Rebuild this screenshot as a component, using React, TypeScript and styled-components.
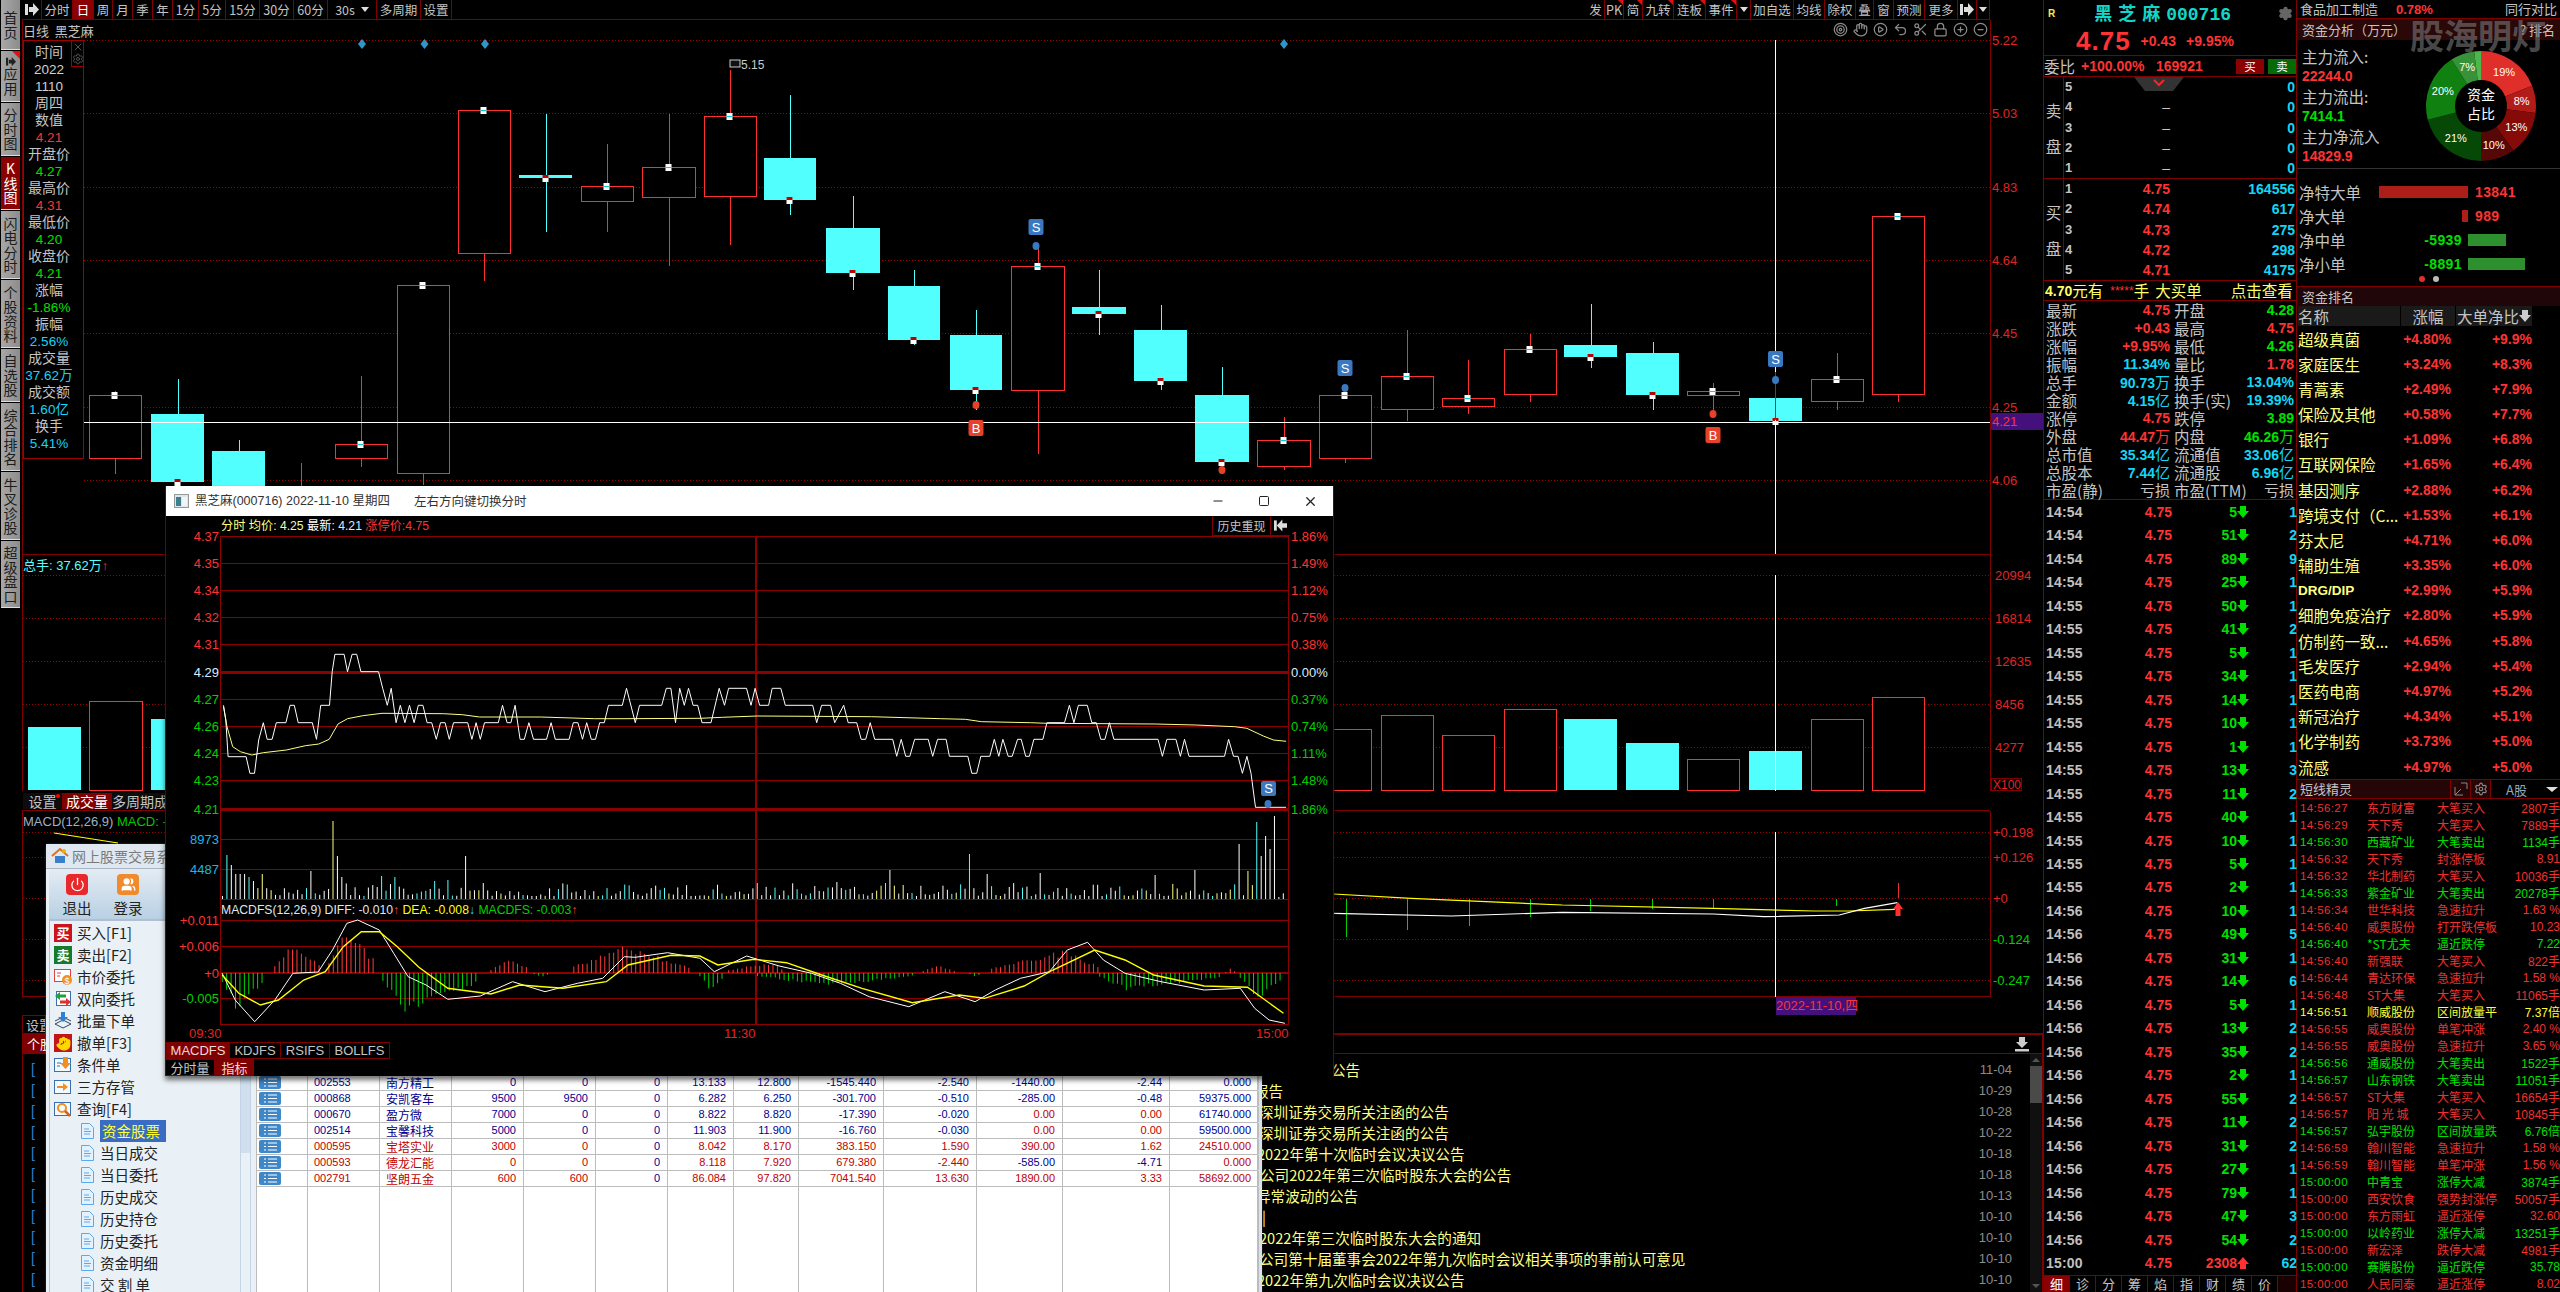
import React from 'react';
import styled, { createGlobalStyle } from 'styled-components';
import { Target, Hand, CirclePlay, Undo2, Scissors, Lock, CirclePlus, CircleMinus, Minus, Square, X, Power, Users, Settings } from 'lucide-react';

const CJK = '"Noto Sans CJK SC", "Liberation Sans", sans-serif';
const NUM = '"Liberation Sans", "Noto Sans CJK SC", sans-serif';
const RED = '#ff3333';
const GREEN = '#00e000';
const CYAN = '#12d6f5';
const DARK = '#7f0000';
const TEXT = '#c4c4c4';
const YEL = '#ffff80';

const Global = createGlobalStyle`
  html, body { margin: 0; padding: 0; background: #000; }
  * { box-sizing: border-box; }
  svg { flex: none; }
  svg text { font-family: ${NUM}; }
`;

/* ---------- data for the drawings ---------- */
type Candle = [number, number, number, number, number, number, 'r' | 'c'];
const candles: Candle[] = [
  [89, 141, 395, 458, 391, 474, 'r'], [151, 204, 414, 482, 379, 482, 'c'], [212, 265, 451, 520, 440, 530, 'c'],
  [274, 327, 500, 530, 463, 540, 'r'], [335, 387, 444, 458, 376, 467, 'r'], [397, 449, 285, 473, 285, 485, 'r'],
  [458, 510, 110, 253, 110, 281, 'r'], [519, 572, 175, 178, 114, 232, 'c'], [581, 633, 186, 201, 144, 232, 'r'],
  [642, 695, 167, 197, 114, 266, 'r'], [704, 756, 116, 196, 70, 245, 'r'], [764, 816, 158, 200, 95, 215, 'c'],
  [826, 880, 228, 273, 196, 290, 'c'], [888, 940, 286, 340, 270, 345, 'c'], [950, 1002, 335, 390, 310, 410, 'c'],
  [1011, 1064, 266, 390, 245, 454, 'r'], [1072, 1126, 307, 314, 270, 335, 'c'], [1134, 1187, 330, 381, 305, 390, 'c'],
  [1195, 1249, 395, 462, 367, 474, 'c'], [1257, 1310, 440, 466, 417, 470, 'r'], [1319, 1371, 395, 458, 395, 463, 'r'],
  [1381, 1433, 376, 409, 330, 421, 'r'], [1442, 1494, 398, 406, 360, 414, 'r'], [1504, 1556, 349, 394, 334, 402, 'r'],
  [1564, 1617, 345, 357, 304, 368, 'c'], [1626, 1679, 353, 395, 342, 410, 'c'], [1687, 1739, 391, 395, 383, 410, 'r'],
  [1749, 1802, 398, 421, 398, 422, 'c'], [1811, 1863, 379, 401, 353, 410, 'r'], [1872, 1924, 216, 394, 216, 402, 'r'],
];
const volBars: [number, number, number, 'r' | 'c'][] = [
  [28, 81, 727, 'c'], [89, 142, 701, 'r'], [151, 204, 719, 'c'], [1319, 1371, 729, 'r'], [1381, 1433, 715, 'r'],
  [1442, 1494, 735, 'r'], [1504, 1556, 709, 'r'], [1564, 1617, 719, 'c'], [1626, 1679, 743, 'c'], [1687, 1739, 759, 'r'],
  [1749, 1802, 751, 'c'], [1811, 1863, 719, 'r'], [1872, 1924, 697, 'r'],
];

const z5 = (pts: number[][]) => pts.map(([x, y]) => `${(160 + x / 2.613).toFixed(1)},${(480 + y / 3).toFixed(1)}`).join(' ');
const z6 = (pts: number[][]) => pts.map(([x, y]) => `${(700 + x / 2.45).toFixed(1)},${(480 + y / 3).toFixed(1)}`).join(' ');
const z12 = (pts: number[][]) => pts.map(([x, y]) => `${(210 + x / 1.388).toFixed(1)},${(880 + y / 3).toFixed(1)}`).join(' ');
const z10 = (pts: number[][]) => pts.map(([x, y]) => `${(1260 + x / 1.985).toFixed(1)},${(780 + y / 3).toFixed(1)}`).join(' ');

const priceLine = z5([[166,676],[172,720],[178,830],[225,830],[235,880],[247,880],[258,780],[270,728],[280,778],[293,778],[304,728],[329,728],[340,676],[351,676],[361,728],[398,728],[409,778],[420,676],[443,676],[450,575],[457,523],[481,523],[490,575],[502,523],[514,523],[525,575],[571,575],[582,625],[594,676],[604,625],[617,728],[628,676],[640,728],[652,676],[664,728],[675,676],[687,676],[698,728],[710,728],[722,778],[733,728],[745,728],[756,778],[767,728],[804,728],[815,778],[826,728],[837,778],[848,728],[884,728],[895,676],[907,728],[917,728],[928,676],[941,778],[952,778],[964,728],[976,778],[1010,778],[1022,728],[1033,778],[1069,778],[1080,728],[1092,728],[1104,778],[1115,728],[1127,778],[1138,778],[1149,728],[1161,728],[1172,676],[1208,676],[1219,625],[1242,728],[1253,676],[1311,676],[1323,625],[1335,625],[1347,728],[1358,625],[1370,676],[1381,625],[1393,676],[1405,676]])
  + ' ' + z6([[5,728],[27,728],[47,625],[60,676],[70,625],[114,625],[125,676],[135,625],[146,676],[168,676],[177,625],[198,625],[209,676],[276,676],[286,728],[298,676],[320,676],[330,728],[352,676],[363,728],[384,728],[395,778],[406,778],[417,728],[428,778],[472,778],[482,829],[493,778],[504,829],[514,829],[526,778],[559,778],[570,829],[582,778],[603,778],[611,829],[656,829],[666,880],[678,880],[688,829],[710,829],[721,778],[732,829],[742,778],[755,829],[765,829],[778,778],[787,778],[798,829],[807,829],[818,778],[840,778],[850,728],[893,728],[905,676],[916,728],[927,676],[949,676],[960,728],[971,728],[982,778],[992,778],[1003,728],[1014,778],[1122,778],[1133,829],[1144,778],[1166,778],[1177,829],[1187,778],[1198,829],[1285,829],[1295,778],[1307,829],[1318,829],[1329,880],[1340,829],[1350,880],[1361,982],[1436,982]]);
const avgLine = z5([[166,680],[175,740],[190,800],[210,815],[240,825],[270,818],[330,810],[380,797],[415,792],[442,778],[465,732],[490,716],[530,707],[580,700],[740,701],[790,704],[835,711],[995,711],[1135,716],[1215,716]])
  + ' ' + z6([[0,715],[55,712],[140,708],[420,710],[590,716],[650,718],[690,725],[810,728],[850,730],[1115,732],[1215,735],[1310,740],[1340,745],[1380,768],[1405,780],[1436,784]]);
const macdWhite = z12([[17,280],[35,360],[62,425],[90,360],[115,280],[150,276],[170,210],[190,130],[205,120],[235,150],[255,220],[275,290],[300,315],[330,358],[375,348],[420,305],[465,335],[510,310],[545,295],[575,230],[590,232],[635,218],[680,235],[700,275],[745,228],[790,258],[835,280],[875,310],[915,350],[970,380],[1020,335],[1062,365],[1090,330],[1125,295],[1165,275],[1190,210],[1218,187],[1240,240],[1270,280],[1320,305],[1380,330],[1430,325],[1450,385],[1470,420],[1492,430]]);
const macdYellow = z12([[17,285],[40,340],[70,375],[95,360],[130,300],[160,275],[185,200],[210,155],[235,155],[260,200],[290,262],[330,325],[390,342],[430,315],[490,325],[550,305],[580,255],[640,226],[680,228],[705,255],[755,238],[800,248],[845,282],[905,325],[975,368],[1040,345],[1075,355],[1130,318],[1170,270],[1228,210],[1270,240],[1310,285],[1380,318],[1440,322],[1490,400]]);
const kYellow = z10([[146,342],[300,355],[600,375],[900,385],[1100,393],[1170,393],[1260,388]]);
const kWhite = z10([[146,400],[380,408],[600,397],[900,402],[1000,410],[1150,405],[1200,385],[1265,368]]);

let seed = 4711;
const rnd = () => { seed = (seed * 16807) % 2147483647; return seed / 2147483647; };
const STEP = 4.42;
const tallVol: [number, number, string][] = [[228,44,'c'],[232,34,'w'],[236.5,25,'w'],[241,25,'w'],[245,25,'w'],[250,22,'c'],[254.5,18,'w'],[263,25,'y'],[312,28,'w'],[334.5,78,'y'],[338,43,'w'],[343,22,'w'],[383.5,23,'c'],[396.5,22,'c'],[467,43,'w'],[436,18,'c'],[449,19,'c'],[971,45,'c'],[892,29,'w'],[985,25,'w'],[1042,26,'w'],[759,16,'c'],[839,17,'w'],[1153,24,'w'],[1197,29,'w'],[1237,55,'w'],[1246,28,'y'],[1250,90,'c'],[1255,77,'c'],[1259,43,'w'],[1264.5,63,'w'],[1268,50,'w'],[1273,83,'w'],[1277,2,'w'],[1286.5,52,'w']];
const minuteBars = Array.from({ length: 241 }, (_, i) => {
  const x = 222.5 + i * STEP;
  const r = rnd();
  const k = rnd();
  let h = 3 + r * r * 13;
  let c = k < 0.15 ? '#5ff' : k < 0.3 ? YEL : '#fff';
  const hit = tallVol.find(t => Math.abs(t[0] - x) <= STEP / 2);
  if (hit) { h = hit[1]; c = hit[2] === 'c' ? '#5ff' : hit[2] === 'y' ? YEL : '#fff'; }
  return { x, h, c };
});
const macdSegs: [number, number, number, number, number][] = [
  [90,155,115,31,1],[165,230,185,49,1],[390,445,415,15,1],[505,665,578,28,1],[720,795,780,12,1],[990,1035,1010,8,1],[1085,1235,1190,24,1],[1410,1425,1415,5,1],
  [17,75,35,38,-1],[240,375,270,41,-1],[450,470,460,5,-1],[680,715,695,18,-1],[760,975,860,14,-1],[1055,1070,1062,4,-1],[1235,1405,1270,18,-1],[1430,1490,1455,28,-1],
];
const macdBars = macdSegs.flatMap(([a, b, p, h, s]) => {
  const out: { x: number; h: number; s: number }[] = [];
  for (let z = a; z <= b; z += 6.14) {
    const f = z < p ? (z - a) / Math.max(1, p - a) : (b - z) / Math.max(1, b - p);
    out.push({ x: 210 + z / 1.388, h: Math.max(1, h * (0.25 + 0.75 * f) * (0.7 + 0.3 * rnd())), s });
  }
  return out;
});

/* ---------- shell ---------- */
const Root = styled.div`
  position: relative; display: flex; width: 2560px; height: 1292px; overflow: hidden;
  background: #000; font-family: ${CJK}; color: ${TEXT};
`;
const Rail = styled.nav`
  width: 22px; flex: none; display: flex; flex-direction: column; gap: 1px; padding: 0 2px 0 1px;
`;
const RailTab = styled.div<{ $h: number; $on?: boolean }>`
  position: relative; height: ${p => p.$h}px; width: 19px; flex: none;
  background: ${p => (p.$on ? '#8b0000' : 'linear-gradient(90deg,#a8a8a8,#8c8c8c)')};
  color: ${p => (p.$on ? '#fff' : '#1c1c1c')};
  font-size: 14px; line-height: 14.5px; text-align: center;
  display: flex; flex-direction: column; align-items: center; justify-content: center; padding: 0 2px; border-bottom: 1px solid #ddd;
`;
const RailCorner = styled.i`
  position: absolute; top: 0; right: 0; width: 0; height: 0;
  border-top: 8px solid #e01010; border-left: 8px solid transparent;
`;
const Center = styled.main`
  width: 2021px; flex: none; display: flex; flex-direction: column;
`;
const Toolbar = styled.header`
  height: 20px; width: 1968px; flex: none; display: flex; justify-content: space-between;
  border-bottom: 1px solid ${DARK};
`;
const ToolGroup = styled.div` display: flex; `;
const ToolItem = styled.div<{ $w: number; $on?: boolean; $flag?: boolean }>`
  position: relative; width: ${p => p.$w}px; height: 19px; display: flex; align-items: center; justify-content: center;
  background: ${p => (p.$on ? '#8b0000' : 'transparent')}; color: ${p => (p.$on ? '#fff' : TEXT)};
  border-right: 1px solid ${DARK}; font: 12.5px/19px ${CJK}; white-space: nowrap;
  ${p => p.$flag && `&::after { content:''; position:absolute; top:0; right:0; border-top:5px solid #e01010; border-left:5px solid transparent; }`}
`;
const Caret = styled.i<{ $gap?: number; $wide?: boolean }>`
  width: 0; height: 0; margin-left: ${p => p.$gap ?? 0}px; border-top: 5px solid #ddd;
  border-left: ${p => (p.$wide ? 6 : 4)}px solid transparent; border-right: ${p => (p.$wide ? 6 : 4)}px solid transparent;
`;
const Pane = styled.section<{ $h: number }>` position: relative; height: ${p => p.$h}px; flex: none; `;
const ChartSvg = styled.svg` display: block; `;
const PaneTitle = styled.div`
  position: absolute; left: 1px; top: 2px; font-size: 13px; line-height: 17px; white-space: pre; color: ${TEXT};
`;
const InfoBox = styled.aside`
  position: absolute; left: 1px; top: 20px; width: 61px; height: 419px; padding: 3px 0 0 0;
  border: 1px solid #a00000; background: #000;
  display: flex; flex-direction: column;
`;
const InfoRow = styled.div<{ $c?: string }>`
  height: 17px; line-height: 17px; padding-right: 9px; text-align: center; white-space: nowrap; flex: none;
  color: ${p => p.$c ?? TEXT}; font-family: ${NUM}; font-size: ${p => (p.$c ? 13.5 : 14)}px;
`;
const InfoButtons = styled.div`
  position: absolute; right: 0; top: 0; width: 12px; height: 26px; border-left: 1px solid #a00000; border-bottom: 1px solid #a00000;
  display: flex; flex-direction: column; align-items: center; color: #555;
`;
const IconStrip = styled.div`
  position: absolute; right: 55px; top: 2px; display: flex; gap: 5px; color: #8a8a8a;
`;
const StripHeader = styled.div`
  position: absolute; left: 1px; top: 2px; color: #5ff; font: 13px/20px ${NUM}; white-space: nowrap;
`;
const RedArrow = styled.span` color: ${RED}; `;
const TabsBar = styled.div`
  height: 20px; flex: none; display: flex; align-items: stretch; padding: 2px 0 1px 1px; border-bottom: 1px solid ${DARK}; width: 1968px;
`;
const BarTab = styled.div<{ $w: number; $on?: boolean }>`
  position: relative; width: ${p => p.$w}px; background: ${p => (p.$on ? '#800000' : '#0d0d0d')}; color: ${p => (p.$on ? '#fff' : TEXT)};
  font: 14px/17px ${CJK}; text-align: center; white-space: nowrap; overflow: hidden;
`;
const RedDot = styled.i`
  position: absolute; right: 2px; top: 1px; width: 4px; height: 4px; border-radius: 50%; background: #f00;
`;
const MacdTitle = styled.div`
  position: absolute; left: 1px; top: 3px; font: 13px/16px ${NUM}; color: #a0b0c0; white-space: nowrap;
`;
const GreenText = styled.span` color: #00c800; `;
const DateStrip = styled.div`
  height: 36px; flex: none; display: flex; align-items: flex-start;
`;
const SetBox = styled.div`
  align-self: flex-end; width: 24px; height: 18px; border: 1px solid ${DARK}; border-bottom: none; font: 13px/17px ${CJK}; padding-left: 3px; overflow: hidden; white-space: nowrap;
`;
const DateBadge = styled.div`
  margin-left: 1730px; width: 80px; height: 18px; background: #43107c; color: ${RED}; font: 13px/18px ${NUM}; text-align: center; white-space: nowrap;
`;
const NewsHead = styled.div`
  height: 21px; flex: none; display: flex; justify-content: space-between; align-items: center;
  border-top: 2px solid ${DARK}; border-bottom: 1px solid ${DARK}; border-right: 1px solid ${DARK};
`;
const StockTab = styled.div`
  width: 24px; height: 18px; background: ${DARK}; color: #fff; font: 13px/18px ${CJK}; padding-left: 5px; overflow: hidden; white-space: nowrap;
`;
const DownloadIcon = styled.svg` margin-right: 12px; `;
const NewsBody = styled.div`
  flex: 1; display: flex; min-height: 0; border-left: 1px solid ${DARK}; border-right: 1px solid ${DARK};
`;
const NewsList = styled.div` flex: 1; padding-top: 5px; `;
const NewsRow = styled.div`
  height: 21px; display: flex; align-items: center; padding: 0 18px 0 8px; font: 14.6px/21px ${CJK}; color: ${YEL};
`;
const Bracket = styled.span` width: 6px; flex: none; color: #2a7fd8; font: 14px/21px ${NUM}; `;
const NewsTitle = styled.span<{ $x: number }>` flex: 1; margin-left: ${p => p.$x - 37}px; white-space: nowrap; `;
const NewsDate = styled.span` color: #8c8c8c; font: 13px/21px ${NUM}; `;
const ScrollTrack = styled.div`
  position: relative; width: 12px; flex: none; background: #101010; display: flex; flex-direction: column;
`;
const ScrollArrow = styled.div<{ $down?: boolean }>`
  height: 12px; display: flex; align-items: center; justify-content: center;
  &::after { content:''; border-left:4px solid transparent; border-right:4px solid transparent;
    ${p => (p.$down ? 'border-top:4px solid #555;' : 'border-bottom:4px solid #555;')} }
`;
const ScrollThumb = styled.div` height: 37px; background: #4a4a4a; `;
const ScrollRest = styled.div` flex: 1; `;

/* ---------- quote column ---------- */
const Quote = styled.section`
  width: 254px; flex: none; display: flex; flex-direction: column; border-left: 1px solid ${DARK}; border-right: 1px solid ${DARK};
`;
const NameRow = styled.div`
  height: 27px; flex: none; display: flex; align-items: center; padding: 0 3px 0 4px; justify-content: space-between;
`;
const Rbadge = styled.span` color: #ffe94d; font: bold 10px ${NUM}; `;
const StockName = styled.span`
  color: #14d6c8; font: bold 18px/27px ${CJK}; letter-spacing: 6px; white-space: nowrap; margin-right: 8px;
`;
const StockCode = styled.span` font-family: "Liberation Mono", monospace; letter-spacing: 0; `;
const PriceRow = styled.div`
  height: 29px; flex: none; display: flex; align-items: center; padding-left: 32px; gap: 10px; border-bottom: 1px solid ${DARK};
  color: ${RED}; font: bold 14px/28px ${NUM}; white-space: nowrap;
`;
const BigPrice = styled.span` font-size: 26px; letter-spacing: 1px; `;
const WeibiRow = styled.div`
  height: 21px; flex: none; display: flex; align-items: center; border-bottom: 1px solid ${DARK}; color: ${RED}; font: bold 14px/20px ${NUM};
`;
const WeibiLabel = styled.span` width: 37px; font: 15.5px/20px ${CJK}; color: ${TEXT}; `;
const WeibiVal = styled.span<{ $w: number }>` width: ${p => p.$w}px; `;
const TradeBtn = styled.span<{ $c: string }>`
  width: 28px; height: 15px; margin-left: 4px; background: ${p => p.$c}; color: #fff; font: 11.5px/15px ${CJK}; text-align: center;
`;
const Book = styled.div`
  position: relative; height: 102px; flex: none; display: flex; border-bottom: 1px solid ${DARK};
`;
const BookSide = styled.div`
  width: 20px; flex: none; border-right: 1px solid ${DARK}; display: flex; flex-direction: column; justify-content: center;
  font: 15.5px/36px ${CJK}; text-align: center;
`;
const BookRows = styled.div` flex: 1; display: flex; flex-direction: column; `;
const BookRow = styled.div`
  flex: 1; display: grid; grid-template-columns: 20px 86px 1fr; align-items: center; padding-right: 1px;
  font: bold 14px/18px ${NUM}; white-space: nowrap;
`;
const BookIdx = styled.span` color: ${TEXT}; font-weight: bold; font-size: 13px; padding-left: 1px; `;
const BookPrice = styled.span` text-align: right; color: ${RED}; `;
const BookDash = styled(BookPrice)` color: ${TEXT}; font-weight: 400; `;
const BookVol = styled.span` text-align: right; color: ${CYAN}; `;
const Chevron = styled.div`
  position: absolute; left: 90px; top: 0; width: 50px; height: 14px; background: #333;
  clip-path: polygon(0 0, 100% 0, 78% 100%, 22% 100%); display: flex; justify-content: center;
`;
const BigOrder = styled.div`
  height: 20px; flex: none; display: flex; align-items: center; padding-left: 1px; border-bottom: 1px solid ${DARK};
  color: #ffff66; font: 15.5px/19px ${CJK}; white-space: nowrap;
`;
const BigNum = styled.b` font: bold 14px ${NUM}; `;
const Stars = styled.span` color: ${RED}; margin-left: 7px; font: 12px ${NUM}; `;
const BigMid = styled.span` margin-left: 6px; `;
const BigLink = styled.span` margin-left: 29px; `;
const Stats = styled.div`
  height: 199px; flex: none; display: grid; grid-template-columns: 50px 74px 70px 54px; grid-auto-rows: 18px; padding-left: 2px; border-bottom: 1px solid ${DARK};
  align-content: start; white-space: nowrap;
`;
const StatLabel = styled.span` font: 15.5px/18px ${CJK}; color: ${TEXT}; `;
const StatLabelRight = styled(StatLabel)` padding-left: 4px; `;
const StatVal = styled.span<{ $c: string }>`
  text-align: right; color: ${p => p.$c}; font: bold 14px/18px ${NUM};
  & > i { font: normal 15px/18px ${CJK}; }
`;
const Ticks = styled.div` flex: 1; display: flex; flex-direction: column; min-height: 0; `;
const TickRow = styled.div`
  flex: 1; display: grid; grid-template-columns: 80px 46px 65px 13px 47px; align-items: center; padding-left: 2px;
  font: bold 14px ${NUM}; white-space: nowrap;
`;
const TickTime = styled.span` color: #c0c0c0; letter-spacing: .2px; `;
const TickPrice = styled.span` color: ${RED}; text-align: right; `;
const TickVol = styled.span<{ $up?: boolean }>` color: ${p => (p.$up ? RED : GREEN)}; text-align: right; `;
const TickNum = styled.span` color: ${CYAN}; text-align: right; `;
const QTabs = styled.div` height: 17px; flex: none; display: flex; background: #1a0000; border-top: 1px solid ${DARK}; `;
const QTab = styled.div<{ $on?: boolean }>`
  width: 26px; background: ${p => (p.$on ? '#8b0000' : '#000')}; color: ${p => (p.$on ? '#fff' : TEXT)}; border-right: 1px solid ${DARK};
  font: 13px/16px ${CJK}; text-align: center;
`;

/* ---------- fund column ---------- */
const Side = styled.section` position: relative; width: 263px; flex: none; display: flex; flex-direction: column; overflow: hidden; `;
const Watermark = styled.div`
  position: absolute; left: 113px; top: 13px; font: bold 34px/44px ${CJK}; color: rgba(120,120,120,.62); white-space: nowrap; z-index: 3;
`;
const IndustryRow = styled.div`
  height: 19px; flex: none; display: flex; align-items: center; padding: 0 3px; border-bottom: 1px solid ${DARK}; font: 13px/18px ${CJK}; white-space: nowrap;
`;
const IndustryPct = styled.span` color: ${RED}; font: bold 13px ${NUM}; margin-left: 18px; flex: 1; `;
const FundHead = styled.div`
  height: 21px; flex: none; background: #2a0808; display: flex; align-items: center; justify-content: space-between; padding: 0 5px; font: 13px/20px ${CJK};
`;
const FundBody = styled.div` height: 129px; flex: none; display: flex; padding-top: 6px; border-bottom: 1px solid #333; `;
const FundCol = styled.div` width: 124px; flex: none; padding-left: 5px; `;
const FundLine = styled.div<{ $c?: string }>`
  height: 20px; color: ${p => p.$c ?? TEXT}; font: ${p => (p.$c ? `bold 14px/20px ${NUM}` : `15.5px/20px ${CJK}`)}; white-space: nowrap;
`;
const NetBlock = styled.div` height: 118px; flex: none; padding-top: 11px; border-bottom: 1px solid ${DARK}; `;
const NetRow = styled.div` height: 24px; display: grid; grid-template-columns: 171px 1fr; align-items: center; `;
const NetLeft = styled.div`
  display: flex; align-items: center; justify-content: space-between; padding-left: 2px; font: 15.5px/24px ${CJK}; white-space: nowrap;
`;
const NetNeg = styled.span` display: flex; align-items: center; padding-right: 6px; `;
const NetBar = styled.i<{ $c: string; $w: number }>` display: block; width: ${p => p.$w}px; height: 12px; background: ${p => p.$c}; `;
const NetVal = styled.b<{ $c: string }>` color: ${p => p.$c}; font: bold 14px ${NUM}; letter-spacing: .4px; `;
const NetPos = styled.div<{ $pad?: number }>` display: flex; align-items: center; padding-left: ${p => p.$pad ?? 0}px; `;
const NetDots = styled.div` display: flex; gap: 8px; padding-left: 122px; `;
const NetDot = styled.i<{ $c: string }>` width: 6px; height: 6px; border-radius: 50%; background: ${p => p.$c}; `;
const RankHead = styled.div` height: 19px; flex: none; background: #200608; font: 13px/19px ${CJK}; padding-left: 5px; `;
const RankCols = styled.div`
  height: 20px; flex: none; display: grid; grid-template-columns: 102px 54px 76px; gap: 1px; padding-left: 1px; font: 15.5px/20px ${CJK};
`;
const RankCol = styled.span` background: #1a1a1a; white-space: nowrap; overflow: hidden; display: flex; align-items: center; justify-content: center; `;
const RankColName = styled(RankCol)` justify-content: flex-start; `;
const RankRows = styled.div` height: 454px; flex: none; display: flex; flex-direction: column; border-bottom: 1px solid ${DARK}; `;
const RankRow = styled.div`
  flex: 1; display: grid; grid-template-columns: 103px 50px 81px; align-items: center; padding-left: 1px;
  font: bold 14px ${NUM}; color: ${RED}; white-space: nowrap;
`;
const RankName = styled.span<{ $latin?: boolean }>`
  color: ${YEL}; font: ${p => (p.$latin ? `bold 13.5px ${NUM}` : `15.5px ${CJK}`)}; overflow: hidden;
`;
const RankNum = styled.span` text-align: right; `;
const SpriteHead = styled.div`
  height: 19px; flex: none; background: #250606; display: flex; align-items: center; font: 13px/18px ${CJK}; padding-left: 3px; border-bottom: 1px solid ${DARK};
`;
const SpriteTitle = styled.span` flex: 1; `;
const SpriteIcon = styled.span`
  width: 20px; height: 18px; border-left: 1px solid ${DARK}; color: #888; display: flex; align-items: center; justify-content: center;
`;
const SpriteSelect = styled.span`
  width: 70px; height: 18px; border-left: 1px solid ${DARK}; display: flex; align-items: center; justify-content: space-between; padding: 0 2px 0 15px; background: #000; color: #8ab; font: 13px ${CJK};
`;
const SpriteRows = styled.div` flex: 1; display: flex; flex-direction: column; min-height: 0; `;
const SpriteRow = styled.div<{ $c: string }>`
  flex: 1; display: grid; grid-template-columns: 67px 70px 76px 1fr; align-items: center; padding-left: 3px;
  color: ${p => p.$c}; font: 12px ${CJK}; white-space: nowrap;
`;
const SpriteTime = styled.span` font: 11.5px ${NUM}; letter-spacing: .4px; `;
const SpriteVal = styled.span` text-align: right; font: 12px ${NUM}; `;

/* ---------- intraday popup ---------- */
const Popup = styled.div`
  position: absolute; left: 165px; top: 486px; width: 1169px; height: 590px; z-index: 5; background: #000; display: flex; flex-direction: column;
  box-shadow: 0 4px 5px rgba(0,0,0,.55); border-left: 1px solid #222; border-right: 1px solid #222;
`;
const PopupBar = styled.div`
  height: 30px; flex: none; background: #fff; color: #333; display: flex; align-items: center; padding-left: 8px; font: 12.5px/30px ${CJK}; white-space: nowrap;
`;
const PopupText = styled.span` margin-left: 6px; font-family: ${NUM}; `;
const PopupHint = styled.span` margin-left: 24px; flex: 1; `;
const WinBtn = styled.span` width: 46px; display: flex; justify-content: center; color: #222; `;
const PopupBody = styled.div` position: relative; flex: 1; `;
const HistoryBtn = styled.div`
  position: absolute; left: 1046px; top: 0; height: 20px; display: flex; align-items: center; border-left: 1px solid ${DARK}; border-bottom: 1px solid ${DARK};
`;
const HistoryLabel = styled.span` width: 58px; text-align: center; font: 12px/20px ${CJK}; color: ${TEXT}; border-right: 1px solid ${DARK}; `;
const HistoryIcon = styled.span` width: 19px; display: flex; justify-content: center; `;
const PopupTabs = styled.div` height: 17px; flex: none; display: flex; `;
const PopTab = styled.div<{ $w: number; $on?: boolean }>`
  width: ${p => p.$w}px; background: ${p => (p.$on ? '#7f0000' : '#000')}; color: ${p => (p.$on ? '#f0d8d8' : TEXT)}; border: 1px solid ${DARK}; border-left-width: ${p => (p.$on ? 1 : 0)}px;
  font: 13px/15px ${NUM}; text-align: center; white-space: nowrap;
`;
const PopTabCn = styled(PopTab)` font-family: ${CJK}; `;

/* ---------- trading window ---------- */
const TradeWin = styled.div`
  position: absolute; left: 46px; top: 844px; width: 1216px; height: 460px; z-index: 4; background: #eaf1f6; display: flex; flex-direction: column;
  border-radius: 4px 0 0 0; border-right: 4px solid #d8e2ec; box-shadow: 0 0 2px rgba(255,255,255,.3);
`;
const TradeTitle = styled.div`
  height: 25px; flex: none; display: flex; align-items: center; gap: 3px; padding-left: 5px; background: #dfe8f1; color: #7a7a7a; border-bottom: 1px solid #a9b6c6; font: 14px/24px ${CJK}; white-space: nowrap;
`;
const TradeTools = styled.div`
  height: 52px; flex: none; display: flex; padding: 5px 0 0 15px; gap: 25px; background: linear-gradient(#e4ecf3, #b9d0e4); border-bottom: 2px solid #b0c0d0; margin-left: 3px;
`;
const TradeTool = styled.div` width: 26px; display: flex; flex-direction: column; align-items: center; font: 14.5px/22px ${CJK}; color: #222; white-space: nowrap; `;
const ToolGlyph = styled.span<{ $bg: string }>`
  width: 22px; height: 22px; border-radius: 4px; background: ${p => p.$bg}; color: #fff; display: flex; align-items: center; justify-content: center; margin-bottom: 2px;
`;
const TradeBody = styled.div` flex: 1; display: flex; min-height: 0; margin-left: 3px; border-left: 1px solid #b8c6d4; `;
const Tree = styled.div` width: 190px; flex: none; padding: 1px 0 0 4px; `;
const TreeRow = styled.div<{ $sub?: boolean }>`
  height: 22px; display: flex; align-items: center; gap: 5px; padding-left: ${p => (p.$sub ? 26 : 0)}px; color: #222; font: 14.5px/22px ${CJK}; white-space: nowrap;
`;
const TreeTile = styled.span<{ $bg: string }>`
  width: 18px; height: 18px; background: ${p => p.$bg}; color: #fff; font: bold 13px/18px ${CJK}; text-align: center; flex: none;
  display: flex; align-items: center; justify-content: center;
`;
const TreeLabel = styled.span<{ $on?: boolean }>`
  padding: 0 ${p => (p.$on ? 6 : 0)}px 0 ${p => (p.$on ? 2 : 0)}px; background: ${p => (p.$on ? '#3a6cc4' : 'transparent')}; color: ${p => (p.$on ? '#ffff33' : '#222')};
`;
const TreeScroll = styled.div`
  width: 11px; flex: none; background: linear-gradient(#cfdfee 0, #cfdfee 232px, #eaf1f6 232px);
  border-left: 1px solid #c4d4e4; border-right: 1px solid #c4d4e4;
`;
const TableWrap = styled.div`
  margin-left: 5px; width: 1002px; flex: none; background: #fff; padding-top: 154px; border-left: 1px solid #bcbcbc; border-right: 1px solid #bcbcbc;
`;
const TRow = styled.div<{ $blank?: boolean }>`
  height: 16px; display: grid; grid-template-columns: 51px 72px 72px 72px 72px 72px 66px 65px 85px 93px 86px 107px 89px;
  border-bottom: ${p => (p.$blank ? 'none' : '1px solid #bcbcbc')};
`;
const TCell = styled.div<{ $c?: string; $left?: boolean }>`
  border-right: 1px solid #bcbcbc; padding: 0 ${p => (p.$left ? 0 : 7)}px 0 ${p => (p.$left ? 6 : 0)}px; text-align: ${p => (p.$left ? 'left' : 'right')};
  color: ${p => p.$c}; font: 11px/15px ${NUM}; overflow: hidden; white-space: nowrap;
`;
const TName = styled(TCell)` font: 12px/15px ${CJK}; `;
const TIcon = styled.div` border-right: 1px solid #bcbcbc; padding: 1px 0 0 2px; `;

/* ---------- small drawings ---------- */
const Marker = ({ x, y, up }: { x: number; y: number; up: boolean }) => (
  <g>
    <rect x={x - 3} y={y - 3} width={6} height={7} fill="#fff" />
    <rect x={x - 3} y={y - (up ? 0 : 3)} width={6} height={up ? 1 : 3} fill={up ? '#0cc' : '#b00'} />
  </g>
);
const Flag = ({ x, y, t, c }: { x: number; y: number; t: string; c: string }) => (
  <g>
    <rect x={x - 7.5} y={y - 8} width={15} height={16} rx={2} fill={c} />
    <text x={x} y={y + 4.5} fontSize={13} textAnchor="middle" fill="#fff">{t}</text>
  </g>
);
const Diamond = ({ x, y }: { x: number; y: number }) => (
  <polygon points={`${x},${y - 5} ${x + 4},${y} ${x},${y + 5} ${x - 4},${y}`} fill="#2f96c8" />
);
const Dot = ({ x, y, c }: { x: number; y: number; c: string }) => (
  <ellipse cx={x} cy={y} rx={3.5} ry={4} fill={c} />
);
const dotted = { stroke: '#a00000', strokeDasharray: '1 2' };
const axis = { fontSize: 13, fill: '#e02424' };

const ArrowBar = ({ c = '#ddd', s = 14 }: { c?: string; s?: number }) => (
  <svg width={s} height={s * 13 / 14} viewBox="0 0 14 13"><rect x="0" y="1" width="3" height="11" fill={c} /><polygon points="4,4 8,4 8,0 14,6.5 8,13 8,9 4,9" fill={c} /></svg>
);
const DownArrow = ({ c }: { c: string }) => (
  <svg width="12" height="12" viewBox="0 0 12 12"><polygon points="3,0 9,0 9,5 12,5 6,12 0,5 3,5" fill={c} /></svg>
);
const UpArrow = ({ c }: { c: string }) => (
  <svg width="12" height="12" viewBox="0 0 12 12"><polygon points="3,12 9,12 9,7 12,7 6,0 0,7 3,7" fill={c} /></svg>
);

const PriceChart = () => (
  <ChartSvg width={2021} height={534} viewBox="22 20 2021 534">
    <line x1={22.5} y1={20} x2={22.5} y2={554} stroke={DARK} />
    <line x1={1990.5} y1={20} x2={1990.5} y2={554} stroke={DARK} />
    {[[40, '5.22'], [113, '5.03'], [187, '4.83'], [260, '4.64'], [333, '4.45'], [407, '4.25'], [480, '4.06']].map(([y, t]) => (
      <g key={y as number}>
        <line x1={84} x2={1990} y1={(y as number) + 0.5} y2={(y as number) + 0.5} {...dotted} />
        <text x={1992} y={(y as number) + 5} {...axis}>{t}</text>
      </g>
    ))}
    {candles.map(([a, b, t, u, wt, wb, k]) => {
      const cx = Math.round((a + b) / 2) + 0.5;
      const col = k === 'r' ? '#ff3030' : '#52ffff';
      return (
        <g key={a}>
          <line x1={cx} x2={cx} y1={wt} y2={wb} stroke={col} />
          {k === 'r'
            ? <rect x={a + 0.5} y={t + 0.5} width={b - a} height={u - t} fill="#000" stroke={col} />
            : <rect x={a} y={t} width={b - a} height={u - t} fill={col} />}
          <Marker x={cx - 1} y={k === 'r' ? t : u} up={k === 'r'} />
        </g>
      );
    })}
    <line x1={84} x2={1990} y1={422.5} y2={422.5} stroke="#fff" />
    <line x1={1775.5} x2={1775.5} y1={40} y2={554} stroke="#fff" />
    <line x1={1775.5} x2={1775.5} y1={372} y2={420} stroke="#b02020" />
    <rect x={1991} y={413} width={52} height={17} fill="#43107c" />
    <text x={1992} y={426} {...axis} fill="#ff3333">4.21</text>
    {[[362, 44], [424.5, 44], [485, 44], [1284, 44]].map(([x, y]) => <Diamond key={x} x={x} y={y} />)}
    <rect x={730} y={60} width={10} height={7} fill="#111" stroke="#ccc" />
    <text x={741} y={69} fontSize={12} fill="#ccc">5.15</text>
    <Flag x={1036} y={227} t="S" c="#3a78c0" /><Dot x={1036} y={246} c="#3a78c0" />
    <Flag x={976} y={428} t="B" c="#e8412a" /><Dot x={976} y={405} c="#e8412a" />
    <Flag x={1345} y={368} t="S" c="#3a78c0" /><Dot x={1345} y={388} c="#3a78c0" />
    <Flag x={1713} y={435} t="B" c="#e8412a" /><Dot x={1713} y={414} c="#e8412a" />
    <Flag x={1775.5} y={359} t="S" c="#3a78c0" /><Dot x={1775.5} y={380} c="#3a78c0" />
    <Dot x={1222} y={470} c="#e8412a" />
  </ChartSvg>
);

const VolumeChart = () => (
  <ChartSvg width={2021} height={237} viewBox="22 554 2021 237">
    <line x1={22} x2={1990} y1={554.5} y2={554.5} stroke={DARK} />
    <line x1={22.5} y1={554} x2={22.5} y2={791} stroke={DARK} />
    <line x1={1990.5} y1={554} x2={1990.5} y2={791} stroke={DARK} />
    {[[575, '20994'], [618, '16814'], [661, '12635'], [704, '8456'], [747, '4277']].map(([y, t]) => (
      <g key={y as number}>
        <line x1={23} x2={1990} y1={(y as number) + 0.5} y2={(y as number) + 0.5} {...dotted} />
        <text x={1995} y={(y as number) + 5} {...axis}>{t}</text>
      </g>
    ))}
    {volBars.map(([a, b, t, k]) => k === 'r'
      ? <rect key={a} x={a + 0.5} y={t + 0.5} width={b - a} height={790 - t} fill="#000" stroke="#ff3030" />
      : <rect key={a} x={a} y={t} width={b - a} height={790 - t} fill="#52ffff" />)}
    <line x1={1775.5} x2={1775.5} y1={575} y2={791} stroke="#fff" />
    <rect x={1991.5} y={778.5} width={30} height={12} fill="none" stroke={DARK} />
    <text x={1993} y={789} fontSize={12} fill="#e02424">X100</text>
  </ChartSvg>
);

const MacdChart = () => (
  <ChartSvg width={2021} height={186} viewBox="22 811 2021 186">
    <line x1={22.5} y1={811} x2={22.5} y2={997} stroke={DARK} />
    <line x1={1990.5} y1={811} x2={1990.5} y2={997} stroke={DARK} />
    <line x1={22} x2={1990} y1={996.5} y2={996.5} stroke={DARK} />
    {[[832, '+0.198', '#e02424'], [857, '+0.126', '#e02424'], [898, '+0', '#e02424'], [939, '-0.124', '#00d000'], [980, '-0.247', '#00d000']].map(([y, t, c]) => (
      <g key={y as number}>
        <line x1={23} x2={1990} y1={(y as number) + 0.5} y2={(y as number) + 0.5} {...dotted} />
        <text x={1993} y={(y as number) + 5} fontSize={13} fill={c as string}>{t}</text>
      </g>
    ))}
    <polyline points="54,833 118,843" fill="none" stroke="#ffff00" strokeWidth={1.2} />
    {[[1346, 937], [1407, 930], [1469, 926], [1530, 917], [1590, 911], [1652, 909], [1713, 908], [1836, 906]].map(([x, y]) => (
      <line key={x} x1={x + 0.5} x2={x + 0.5} y1={899} y2={y} stroke="#00d000" />
    ))}
    <line x1={1898.5} x2={1898.5} y1={883} y2={898} stroke="#e03030" />
    <polyline points={kYellow} fill="none" stroke="#ffff00" strokeWidth={1.2} />
    <polyline points={kWhite} fill="none" stroke="#fff" strokeWidth={1.2} />
    <polygon points="1898,902 1903,909 1900.5,909 1900.5,916 1895.5,916 1895.5,909 1893,909" fill="#ff3030" />
    <line x1={1775.5} x2={1775.5} y1={832} y2={997} stroke="#fff" />
  </ChartSvg>
);

const PopupChart = () => {
  const hLines = [536, 563, 590, 617, 644, 699, 726, 753, 780, 839, 869, 899, 920, 946, 998, 1024];
  const left = [[536,'4.37',RED],[563,'4.35',RED],[590,'4.34',RED],[617,'4.32',RED],[644,'4.31',RED],[672,'4.29','#d8ecff'],[699,'4.27','#00d000'],[726,'4.26','#00d000'],[753,'4.24','#00d000'],[780,'4.23','#00d000'],[809,'4.21','#00d000'],[839,'8973','#18b8e8'],[869,'4487','#18b8e8'],[920,'+0.011',RED],[946,'+0.006',RED],[973,'+0',RED],[998,'-0.005','#00d000']];
  const right = [[536,'1.86%',RED],[563,'1.49%',RED],[590,'1.12%',RED],[617,'0.75%',RED],[644,'0.38%',RED],[672,'0.00%','#d8ecff'],[699,'0.37%','#00d000'],[726,'0.74%','#00d000'],[753,'1.11%','#00d000'],[780,'1.48%','#00d000'],[809,'1.86%','#00d000']];
  return (
    <ChartSvg width={1167} height={526} viewBox="166 516 1167 526">
      <text x={221} y={530} fontSize={12.2}>
        <tspan fill={YEL}>分时 均价: </tspan><tspan fill="#e6ffb0">4.25 </tspan><tspan fill="#fff">最新: </tspan><tspan fill="#d8ecff">4.21 </tspan><tspan fill={RED}>涨停价:4.75</tspan>
      </text>
      {hLines.map(y => <line key={y} x1={220} x2={1289} y1={y + 0.5} y2={y + 0.5} stroke="#8b0000" />)}
      {[672, 809].map(y => <rect key={y} x={220} y={y - 1} width={1069} height={3} fill="#8b0000" />)}
      <rect x={220} y={972} width={1069} height={2} fill="#8b0000" />
      <line x1={220.5} x2={220.5} y1={536} y2={1024} stroke="#8b0000" />
      <line x1={1288.5} x2={1288.5} y1={536} y2={1024} stroke="#8b0000" />
      <rect x={755} y={536} width={2} height={488} fill="#8b0000" />
      {left.map(([y, t, c]) => <text key={`${y}`} x={219} y={(y as number) + 5} fontSize={13} textAnchor="end" fill={c as string}>{t}</text>)}
      {right.map(([y, t, c]) => <text key={`${y}`} x={1291} y={(y as number) + 5} fontSize={13} fill={c as string}>{t}</text>)}
      <polyline points={avgLine} fill="none" stroke="#ffff80" strokeWidth={1} />
      <polyline points={priceLine} fill="none" stroke="#fff" strokeWidth={1} />
      {minuteBars.map(b => <line key={b.x} x1={b.x} x2={b.x} y1={899} y2={899 - b.h} stroke={b.c} />)}
      <rect x={1261} y={781} width={15} height={15} rx={2} fill="#3a78c0" />
      <text x={1268.5} y={793} fontSize={13} textAnchor="middle" fill="#fff">S</text>
      <Dot x={1268} y={804} c="#3a78c0" />
      <text x={221} y={914} fontSize={12.2}>
        <tspan fill="#dfe8f0">MACDFS(12,26,9) DIFF: -0.010</tspan><tspan fill={RED}>↑ </tspan><tspan fill="#ffff00">DEA: -0.008</tspan><tspan fill={CYAN}>↓ </tspan><tspan fill="#00d000">MACDFS: -0.003</tspan><tspan fill={RED}>↑</tspan>
      </text>
      {macdBars.map((b, i) => <line key={i} x1={b.x} x2={b.x} y1={973} y2={973 - b.s * b.h} stroke={b.s > 0 ? '#ff3b3b' : '#00d800'} />)}
      <polyline points={macdWhite} fill="none" stroke="#fff" strokeWidth={1} />
      <polyline points={macdYellow} fill="none" stroke="#ffff00" strokeWidth={1.4} />
      <text x={189} y={1038} fontSize={13} fill="#e02424">09:30</text>
      <text x={724} y={1038} fontSize={13} fill="#e02424">11:30</text>
      <text x={1256} y={1038} fontSize={13} fill="#e02424">15:00</text>
    </ChartSvg>
  );
};

const donut = [[19,'#e02e2a'],[8,'#b21c18'],[13,'#860a08'],[10,'#560806'],[21,'#064806'],[20,'#108010'],[7,'#38923a'],[2,'#4cb84c']] as [number, string][];
const Donut = () => {
  let acc = 0;
  const pt = (p: number, r: number) => {
    const a = (p / 100) * 2 * Math.PI - Math.PI / 2;
    return [60 + r * Math.cos(a), 60 + r * Math.sin(a)];
  };
  return (
    <svg width="120" height="120" viewBox="0 0 120 120">
      {donut.map(([v, c]) => {
        const s = acc; const e = acc + v; acc = e;
        const [x1, y1] = pt(s, 55); const [x2, y2] = pt(e, 55);
        const [x3, y3] = pt(e, 26); const [x4, y4] = pt(s, 26);
        const l = v > 50 ? 1 : 0;
        const [tx, ty] = pt((s + e) / 2, 41);
        return (
          <g key={c}>
            <path d={`M${x1} ${y1}A55 55 0 ${l} 1 ${x2} ${y2}L${x3} ${y3}A26 26 0 ${l} 0 ${x4} ${y4}Z`} fill={c} />
            {v > 2 && <text x={tx} y={ty + 4} fontSize={11} fill="#fff" textAnchor="middle">{v}%</text>}
          </g>
        );
      })}
      <text x="60" y="54" fontSize="14" fill="#fff" textAnchor="middle">资金</text>
      <text x="60" y="73" fontSize="14" fill="#fff" textAnchor="middle">占比</text>
    </svg>
  );
};

const DocIcon = () => (
  <svg width="15" height="16" viewBox="0 0 15 16">
    <path d="M1.5.5h8l4 4v11h-12z" fill="#e4f2ff" stroke="#58aaec" />
    <path d="M4 6h5M4 8.5h7M4 11h6" stroke="#58aaec" />
  </svg>
);
const Frame = ({ children }: { children?: React.ReactNode }) => (
  <svg width="18" height="18" viewBox="0 0 18 18">
    <rect x=".5" y="2.5" width="16" height="13" fill="#f4f9ff" stroke="#3a70b0" />
    {children}
  </svg>
);
const ListIcon = () => (
  <svg width="22" height="13" viewBox="0 0 22 13" display="block">
    <rect width="22" height="13" rx="2" fill="#3e87c8" />
    <path d="M5 3h2M9 3h9M5 6.5h2M9 6.5h9M5 10h2M9 10h9" stroke="#fff" />
  </svg>
);

/* ---------- content tables ---------- */
const toolLeft: [string, number, boolean?][] = [['分时', 31], ['日', 21, true], ['周', 19], ['月', 20], ['季', 20], ['年', 20], ['1分', 26], ['5分', 27], ['15分', 34], ['30分', 34], ['60分', 34]];
const toolRight1: [string, number, boolean?][] = [['发', 18], ['PK', 19, true], ['简', 19, true], ['九转', 31, true], ['连板', 32, true], ['事件', 31, true]];
const toolRight2: [string, number][] = [['加自选', 43], ['均线', 31], ['除权', 31], ['叠', 18], ['窗', 20], ['预测', 31], ['更多', 33]];
const infoRows: [string, string?][] = [['时间'], ['2022', '#d0d0d0'], ['1110', '#d0d0d0'], ['周四'], ['数值'], ['4.21', RED], ['开盘价'], ['4.27', GREEN], ['最高价'], ['4.31', RED], ['最低价'], ['4.20', GREEN], ['收盘价'], ['4.21', GREEN], ['涨幅'], ['-1.86%', GREEN], ['振幅'], ['2.56%', CYAN], ['成交量'], ['37.62万', CYAN], ['成交额'], ['1.60亿', CYAN], ['换手'], ['5.41%', CYAN]];
const railTabs: [string, number, boolean?][] = [['首页', 50], ['应用', 51], ['分时图', 53], ['K线图', 53, true], ['闪电分时', 68], ['个股资料', 68], ['自选股', 53], ['综合排名', 68], ['牛叉诊股', 68], ['超级盘口', 67]];
const news: [number, string, string][] = [[1331, '公告', '11-04'], [1254, '报告', '10-29'], [1259, '深圳证券交易所关注函的公告', '10-28'], [1259, '深圳证券交易所关注函的公告', '10-22'], [1257, '2022年第十次临时会议决议公告', '10-18'], [1260, '公司2022年第三次临时股东大会的公告', '10-18'], [1256, '异常波动的公告', '10-13'], [1262, '|', '10-10'], [1259, '2022年第三次临时股东大会的通知', '10-10'], [1259, '公司第十届董事会2022年第九次临时会议相关事项的事前认可意见', '10-10'], [1257, '2022年第九次临时会议决议公告', '10-10']];
const bids = [['1', '4.75', '164556'], ['2', '4.74', '617'], ['3', '4.73', '275'], ['4', '4.72', '298'], ['5', '4.71', '4175']];
const stats: [string, string, string, string, string, string][] = [
  ['最新', '4.75', RED, '开盘', '4.28', GREEN], ['涨跌', '+0.43', RED, '最高', '4.75', RED], ['涨幅', '+9.95%', RED, '最低', '4.26', GREEN],
  ['振幅', '11.34%', CYAN, '量比', '1.78', RED], ['总手', '90.73万', CYAN, '换手', '13.04%', CYAN], ['金额', '4.15亿', CYAN, '换手(实)', '19.39%', CYAN],
  ['涨停', '4.75', RED, '跌停', '3.89', GREEN], ['外盘', '44.47万', RED, '内盘', '46.26万', GREEN], ['总市值', '35.34亿', CYAN, '流通值', '33.06亿', CYAN],
  ['总股本', '7.44亿', CYAN, '流通股', '6.96亿', CYAN], ['市盈(静)', '亏损', TEXT, '市盈(TTM)', '亏损', TEXT],
];
const ticks: [string, number, number][] = [['14:54',5,1],['14:54',51,2],['14:54',89,9],['14:54',25,1],['14:55',50,1],['14:55',41,2],['14:55',5,1],['14:55',34,1],['14:55',14,1],['14:55',10,1],['14:55',1,1],['14:55',13,3],['14:55',11,2],['14:55',40,1],['14:55',10,1],['14:55',5,1],['14:55',2,1],['14:56',10,1],['14:56',49,5],['14:56',31,1],['14:56',14,6],['14:56',5,1],['14:56',13,2],['14:56',35,2],['14:56',2,1],['14:56',55,2],['14:56',11,2],['14:56',31,2],['14:56',27,1],['14:56',79,1],['14:56',47,3],['14:56',54,2],['15:00',2308,62]];
const ranks = [['超级真菌','+4.80%','+9.9%'],['家庭医生','+3.24%','+8.3%'],['青蒿素','+2.49%','+7.9%'],['保险及其他','+0.58%','+7.7%'],['银行','+1.09%','+6.8%'],['互联网保险','+1.65%','+6.4%'],['基因测序','+2.88%','+6.2%'],['跨境支付（C...','+1.53%','+6.1%'],['芬太尼','+4.71%','+6.0%'],['辅助生殖','+3.35%','+6.0%'],['DRG/DIP','+2.99%','+5.9%'],['细胞免疫治疗','+2.80%','+5.9%'],['仿制药一致...','+4.65%','+5.8%'],['毛发医疗','+2.94%','+5.4%'],['医药电商','+4.97%','+5.2%'],['新冠治疗','+4.34%','+5.1%'],['化学制药','+3.73%','+5.0%'],['流感','+4.97%','+5.0%']];
const sprite = `r 14:56:27 东方财富 大笔买入 2807手
r 14:56:29 天下秀 大笔买入 7889手
g 14:56:30 西藏矿业 大笔卖出 1134手
r 14:56:32 天下秀 封涨停板 8.91
r 14:56:32 华北制药 大笔买入 10036手
g 14:56:33 紫金矿业 大笔卖出 20278手
r 14:56:34 世华科技 急速拉升 1.63%
r 14:56:40 威奥股份 打开跌停板 10.23
g 14:56:40 *ST尤夫 逼近跌停 7.22
r 14:56:40 新强联 大笔买入 822手
r 14:56:44 青达环保 急速拉升 1.58%
r 14:56:48 ST大集 大笔买入 11065手
y 14:56:51 顺威股份 区间放量平 7.37倍
r 14:56:55 威奥股份 单笔冲涨 2.40%
r 14:56:55 威奥股份 急速拉升 3.65%
g 14:56:56 通威股份 大笔卖出 1522手
g 14:56:57 山东钢铁 大笔卖出 11051手
r 14:56:57 ST大集 大笔买入 16654手
r 14:56:57 阳_光_城 大笔买入 10845手
g 14:56:57 弘宇股份 区间放量跌 6.76倍
r 14:56:59 翰川智能 急速拉升 1.58%
r 14:56:59 翰川智能 单笔冲涨 1.56%
g 15:00:00 中青宝 涨停大减 3874手
r 15:00:00 西安饮食 强势封涨停 50057手
r 15:00:00 东方雨虹 逼近涨停 32.60
g 15:00:00 以岭药业 涨停大减 13251手
r 15:00:00 新宏泽 跌停大减 4981手
g 15:00:00 赛腾股份 逼近跌停 35.78
r 15:00:00 人民同泰 逼近涨停 8.02
r 15:00:00 德宏股份 逼近涨停 20.20`.split('\n').map(l => l.split(' '));
const spriteColor: Record<string, string> = { r: '#f03030', g: '#00e000', y: '#ffff33' };
const BLUE = '#000090'; const DRED = '#c00000';
const tableRows: [string, string, string[], string][] = [
  ['002553', '南方精工', ['0','0','0','13.133','12.800','-1545.440','-2.540','-1440.00','-2.44','0.000'], BLUE],
  ['000868', '安凯客车', ['9500','9500','0','6.282','6.250','-301.700','-0.510','-285.00','-0.48','59375.000'], BLUE],
  ['000670', '盈方微', ['7000','0','0','8.822','8.820','-17.390','-0.020','0.00','0.00','61740.000'], BLUE],
  ['002514', '宝馨科技', ['5000','0','0','11.903','11.900','-16.760','-0.030','0.00','0.00','59500.000'], BLUE],
  ['000595', '宝塔实业', ['3000','0','0','8.042','8.170','383.150','1.590','390.00','1.62','24510.000'], DRED],
  ['000593', '德龙汇能', ['0','0','0','8.118','7.920','679.380','-2.440','-585.00','-4.71','0.000'], DRED],
  ['002791', '坚朗五金', ['600','600','0','86.084','97.820','7041.540','13.630','1890.00','3.33','58692.000'], DRED],
];
const cellColor = (rowC: string, j: number, v: string) => {
  if (j === 7 || j === 8) return v.startsWith('-') ? BLUE : DRED;
  if (j === 2) return BLUE;
  return rowC;
};
const unitVal = (s: string) => {
  const m = s.match(/^([^\u4e00-\u9fff]+)([\u4e00-\u9fff])$/);
  return m ? <>{m[1]}<i>{m[2]}</i></> : s;
};
const statVal = (s: string) => (s === '亏损' ? <i>亏损</i> : unitVal(s));

export default function App() {
  return (
    <>
      <Global />
      <Root>
        <Rail>
          {railTabs.map(([t, h, on]) => (
            <RailTab key={t} $h={h} $on={on}>
              {t === '应用' && <RailCorner />}
              {t === '应用' && <ArrowBar c="#222" s={10} />}
              <span>{t}</span>
            </RailTab>
          ))}
        </Rail>

        <Center>
          <Toolbar>
            <ToolGroup>
              <ToolItem $w={20}><ArrowBar /></ToolItem>
              {toolLeft.map(([t, w, on]) => <ToolItem key={t} $w={w} $on={on}>{t}</ToolItem>)}
              <ToolItem $w={49}>30s<Caret $gap={6} /></ToolItem>
              <ToolItem $w={44}>多周期</ToolItem>
              <ToolItem $w={31}>设置</ToolItem>
            </ToolGroup>
            <ToolGroup>
              {toolRight1.map(([t, w, f]) => <ToolItem key={t} $w={w} $flag={f}>{t}</ToolItem>)}
              <ToolItem $w={14}><Caret /></ToolItem>
              {toolRight2.map(([t, w]) => <ToolItem key={t} $w={w}>{t}</ToolItem>)}
              <ToolItem $w={19}><ArrowBar /></ToolItem>
              <ToolItem $w={13}><Caret /></ToolItem>
            </ToolGroup>
          </Toolbar>

          <Pane $h={534}>
            <PriceChart />
            <PaneTitle>日线  黑芝麻</PaneTitle>
            <IconStrip>
              <Target size={15} /><Hand size={15} /><CirclePlay size={15} /><Undo2 size={15} /><Scissors size={15} /><Lock size={15} /><CirclePlus size={15} /><CircleMinus size={15} />
            </IconStrip>
            <InfoBox>
              {infoRows.map(([t, c], i) => <InfoRow key={i} $c={c}>{t}</InfoRow>)}
              <InfoButtons><X size={12} /><Settings size={12} /></InfoButtons>
            </InfoBox>
          </Pane>
          <Pane $h={237}>
            <VolumeChart />
            <StripHeader>总手: 37.62万<RedArrow>↑</RedArrow></StripHeader>
          </Pane>
          <TabsBar>
            <BarTab $w={39}>设置<RedDot /></BarTab>
            <BarTab $w={50} $on>成交量</BarTab>
            <BarTab $w={60}>多周期成交量</BarTab>
          </TabsBar>
          <Pane $h={186}>
            <MacdChart />
            <MacdTitle>MACD(12,26,9) <GreenText>MACD: -0.018</GreenText></MacdTitle>
          </Pane>
          <DateStrip>
            <SetBox>设置</SetBox>
            <DateBadge>2022-11-10,四</DateBadge>
          </DateStrip>
          <NewsHead>
            <StockTab>个股</StockTab>
            <DownloadIcon width="16" height="15" viewBox="0 0 16 15"><polygon points="5,0 11,0 11,5 14,5 8,11 2,5 5,5" fill="#ccc" /><rect x="1" y="12" width="14" height="2.5" fill="#ccc" /></DownloadIcon>
          </NewsHead>
          <NewsBody>
            <NewsList>
              {news.map(([x, t, d], i) => (
                <NewsRow key={i}>
                  <Bracket>[</Bracket>
                  <NewsTitle $x={x}>{t}</NewsTitle>
                  <NewsDate>{d}</NewsDate>
                </NewsRow>
              ))}
            </NewsList>
            <ScrollTrack>
              <ScrollArrow />
              <ScrollThumb />
              <ScrollRest />
              <ScrollArrow $down />
            </ScrollTrack>
          </NewsBody>
        </Center>

        <Quote>
          <NameRow>
            <Rbadge>R</Rbadge>
            <StockName>黑芝麻<StockCode>000716</StockCode></StockName>
            <Settings size={15} color="#666" fill="#666" />
          </NameRow>
          <PriceRow><BigPrice>4.75</BigPrice><span>+0.43</span><span>+9.95%</span></PriceRow>
          <WeibiRow>
            <WeibiLabel>委比</WeibiLabel>
            <WeibiVal $w={75}>+100.00%</WeibiVal>
            <WeibiVal $w={76}>169921</WeibiVal>
            <TradeBtn $c="#8b0000">买</TradeBtn>
            <TradeBtn $c="#066a06">卖</TradeBtn>
          </WeibiRow>
          <Book>
            <BookSide>卖<br />盘</BookSide>
            <BookRows>
              {['5', '4', '3', '2', '1'].map(n => (
                <BookRow key={n}><BookIdx>{n}</BookIdx><BookDash>–</BookDash><BookVol>0</BookVol></BookRow>
              ))}
            </BookRows>
            <Chevron>
              <svg width="14" height="12" viewBox="0 0 14 12"><path d="M2 3l5 5 5-5" fill="none" stroke="#f22" strokeWidth="2" /></svg>
            </Chevron>
          </Book>
          <Book>
            <BookSide>买<br />盘</BookSide>
            <BookRows>
              {bids.map(([n, p, v]) => <BookRow key={n}><BookIdx>{n}</BookIdx><BookPrice>{p}</BookPrice><BookVol>{v}</BookVol></BookRow>)}
            </BookRows>
          </Book>
          <BigOrder>
            <BigNum>4.70</BigNum>元有<Stars>*****</Stars>手<BigMid>大买单</BigMid><BigLink>点击查看</BigLink>
          </BigOrder>
          <Stats>
            {stats.map(r => (
              <React.Fragment key={r[0]}>
                <StatLabel>{r[0]}</StatLabel>
                <StatVal $c={r[2]}>{statVal(r[1])}</StatVal>
                <StatLabelRight>{r[3]}</StatLabelRight>
                <StatVal $c={r[5]}>{statVal(r[4])}</StatVal>
              </React.Fragment>
            ))}
          </Stats>
          <Ticks>
            {ticks.map(([t, v, n], i) => {
              const up = t === '15:00';
              return (
                <TickRow key={i}>
                  <TickTime>{t}</TickTime>
                  <TickPrice>4.75</TickPrice>
                  <TickVol $up={up}>{v}</TickVol>
                  {up ? <UpArrow c="#ff3030" /> : <DownArrow c="#00e000" />}
                  <TickNum>{n}</TickNum>
                </TickRow>
              );
            })}
          </Ticks>
          <QTabs>
            {['细', '诊', '分', '筹', '焰', '指', '财', '绩', '价'].map((t, i) => <QTab key={t} $on={i === 0}>{t}</QTab>)}
          </QTabs>
        </Quote>

        <Side>
          <Watermark>股海明灯</Watermark>
          <IndustryRow>食品加工制造<IndustryPct>0.78%</IndustryPct>同行对比</IndustryRow>
          <FundHead><span>资金分析（万元）</span><span>?  排名</span></FundHead>
          <FundBody>
            <FundCol>
              <FundLine>主力流入:</FundLine>
              <FundLine $c={RED}>22244.0</FundLine>
              <FundLine>主力流出:</FundLine>
              <FundLine $c={GREEN}>7414.1</FundLine>
              <FundLine>主力净流入</FundLine>
              <FundLine $c={RED}>14829.9</FundLine>
            </FundCol>
            <Donut />
          </FundBody>
          <NetBlock>
            <NetRow>
              <NetLeft>净特大单<NetBar $c="#ad1e18" $w={89} /></NetLeft>
              <NetPos $pad={7}><NetVal $c={RED}>13841</NetVal></NetPos>
            </NetRow>
            <NetRow>
              <NetLeft>净大单<NetBar $c="#ad1e18" $w={6} /></NetLeft>
              <NetPos $pad={7}><NetVal $c={RED}>989</NetVal></NetPos>
            </NetRow>
            <NetRow>
              <NetLeft>净中单<NetNeg><NetVal $c={GREEN}>-5939</NetVal></NetNeg></NetLeft>
              <NetPos><NetBar $c="#2e8f2e" $w={38} /></NetPos>
            </NetRow>
            <NetRow>
              <NetLeft>净小单<NetNeg><NetVal $c={GREEN}>-8891</NetVal></NetNeg></NetLeft>
              <NetPos><NetBar $c="#2e8f2e" $w={57} /></NetPos>
            </NetRow>
            <NetDots><NetDot $c="#e03030" /><NetDot $c="#bbb" /></NetDots>
          </NetBlock>
          <RankHead>资金排名</RankHead>
          <RankCols>
            <RankColName>名称</RankColName>
            <RankCol>涨幅</RankCol>
            <RankCol>大单净比<DownArrow c="#ccc" /></RankCol>
          </RankCols>
          <RankRows>
            {ranks.map(([n, a, b]) => (
              <RankRow key={n}>
                <RankName $latin={n === 'DRG/DIP'}>{n}</RankName>
                <RankNum>{a}</RankNum>
                <RankNum>{b}</RankNum>
              </RankRow>
            ))}
          </RankRows>
          <SpriteHead>
            <SpriteTitle>短线精灵</SpriteTitle>
            <SpriteIcon><svg width="14" height="14" viewBox="0 0 14 14"><path d="M1 5v8h8M7 1h6v6M1 13L7 7" fill="none" stroke="#888" /></svg></SpriteIcon>
            <SpriteIcon><Settings size={14} /></SpriteIcon>
            <SpriteSelect>A股<Caret $wide /></SpriteSelect>
          </SpriteHead>
          <SpriteRows>
            {sprite.map(([c, t, n, k, v], i) => (
              <SpriteRow key={i} $c={spriteColor[c]}>
                <SpriteTime>{t}</SpriteTime>
                <span>{n.replace(/_/g, '  ')}</span>
                <span>{k}</span>
                <SpriteVal>{v.replace('%', ' %')}</SpriteVal>
              </SpriteRow>
            ))}
          </SpriteRows>
        </Side>

        <TradeWin>
          <TradeTitle>
            <svg width="18" height="18" viewBox="0 0 18 18"><path d="M1 9l8-7 8 7" fill="none" stroke="#e07020" strokeWidth="2" /><rect x="4" y="9" width="10" height="7" fill="#3a80c8" /><circle cx="13" cy="4" r="2" fill="#f0b000" /></svg>
            网上股票交易系统
          </TradeTitle>
          <TradeTools>
            <TradeTool><ToolGlyph $bg="#e8282a"><Power size={15} /></ToolGlyph>退出</TradeTool>
            <TradeTool><ToolGlyph $bg="#f08a2c"><Users size={15} fill="#fff" /></ToolGlyph>登录</TradeTool>
            <TradeTool><ToolGlyph $bg="#5a6ea8"><Lock size={15} /></ToolGlyph>锁定</TradeTool>
          </TradeTools>
          <TradeBody>
            <Tree>
              <TreeRow><TreeTile $bg="#c8141c">买</TreeTile>买入[F1]</TreeRow>
              <TreeRow><TreeTile $bg="#147a2c">卖</TreeTile>卖出[F2]</TreeRow>
              <TreeRow>
                <svg width="18" height="18" viewBox="0 0 18 18"><rect x=".5" y="1.5" width="16" height="12" fill="#fff" stroke="#e04040" /><path d="M3 5h4M3 8h3" stroke="#e04040" /><circle cx="13" cy="12" r="5" fill="#f09020" /><text x="13" y="15.5" fontSize="9" fill="#fff" textAnchor="middle">$</text></svg>
                市价委托
              </TreeRow>
              <TreeRow>
                <svg width="18" height="18" viewBox="0 0 18 18"><rect x="2.5" y="1.5" width="14" height="14" fill="#fff" stroke="#3a70b0" /><path d="M1 6l5-4v2.500h6v3H6V10z" fill="#20a040" /><path d="M17 12l-5-4v2.500H6v3h6V16z" fill="#e03030" /></svg>
                双向委托
              </TreeRow>
              <TreeRow>
                <svg width="18" height="18" viewBox="0 0 18 18"><path d="M1 12l8-4 8 4-8 4zM1 9l8-4 8 4" fill="none" stroke="#345" /><path d="M7 0h4v5h3l-5 5-5-5h3z" fill="#2f80d0" /></svg>
                批量下单
              </TreeRow>
              <TreeRow>
                <TreeTile $bg="#c01818"><Hand size={15} color="#ffd800" fill="#ffd800" /></TreeTile>
                撤单[F3]
              </TreeRow>
              <TreeRow>
                <Frame><path d="M9 1h5v6h3l-5.500 6L6 7h3z" fill="#f09020" /><path d="M3 7h4M3 10h3" stroke="#3a70b0" /></Frame>
                条件单
              </TreeRow>
              <TreeRow>
                <Frame><path d="M3 8h6V5l5 4-5 4v-3H3z" fill="#f09020" /></Frame>
                三方存管
              </TreeRow>
              <TreeRow>
                <Frame><circle cx="8" cy="8" r="4" fill="none" stroke="#f09020" strokeWidth="2" /><path d="M11 11l5 5" stroke="#e06010" strokeWidth="2.500" /></Frame>
                查询[F4]
              </TreeRow>
              {['资金股票', '当日成交', '当日委托', '历史成交', '历史持仓', '历史委托', '资金明细', '交  割  单'].map((t, i) => (
                <TreeRow key={t} $sub><DocIcon /><TreeLabel $on={i === 0}>{t}</TreeLabel></TreeRow>
              ))}
            </Tree>
            <TreeScroll />
            <TableWrap>
              {tableRows.map(([code, name, vals, c]) => (
                <TRow key={code}>
                  <TIcon><ListIcon /></TIcon>
                  <TCell $c={c} $left>{code}</TCell>
                  <TName $c={c} $left>{name}</TName>
                  {vals.map((v, j) => <TCell key={j} $c={cellColor(c, j, v)}>{v}</TCell>)}
                </TRow>
              ))}
              {Array.from({ length: 8 }, (_, i) => (
                <TRow key={i} $blank>{Array.from({ length: 13 }, (_, j) => <TCell key={j} />)}</TRow>
              ))}
            </TableWrap>
          </TradeBody>
        </TradeWin>

        <Popup>
          <PopupBar>
            <svg width="15" height="14" viewBox="0 0 15 14"><rect x=".5" y=".5" width="14" height="13" fill="#dde6ea" stroke="#999" /><rect x="2" y="3" width="5" height="9" fill="#3e7f8f" /><rect x="8" y="3" width="5" height="9" fill="#f4f4f4" /></svg>
            <PopupText>黑芝麻(000716) 2022-11-10 星期四</PopupText>
            <PopupHint>左右方向键切换分时</PopupHint>
            <WinBtn><Minus size={14} /></WinBtn>
            <WinBtn><Square size={12} /></WinBtn>
            <WinBtn><X size={15} /></WinBtn>
          </PopupBar>
          <PopupBody>
            <PopupChart />
            <HistoryBtn>
              <HistoryLabel>历史重现</HistoryLabel>
              <HistoryIcon><svg width="13" height="13" viewBox="0 0 14 13"><rect x="0" y="1" width="3" height="11" fill="#ddd" /><polygon points="14,4 9,4 9,0 3,6.500 9,13 9,9 14,9" fill="#ddd" /></svg></HistoryIcon>
            </HistoryBtn>
            <PopupTabs>
              <PopTab $w={64} $on>MACDFS</PopTab>
              <PopTab $w={51}>KDJFS</PopTab>
              <PopTab $w={49}>RSIFS</PopTab>
              <PopTab $w={60}>BOLLFS</PopTab>
            </PopupTabs>
            <PopupTabs>
              <PopTabCn $w={49}>分时量</PopTabCn>
              <PopTabCn $w={39} $on>指标</PopTabCn>
            </PopupTabs>
          </PopupBody>
        </Popup>
      </Root>
    </>
  );
}
